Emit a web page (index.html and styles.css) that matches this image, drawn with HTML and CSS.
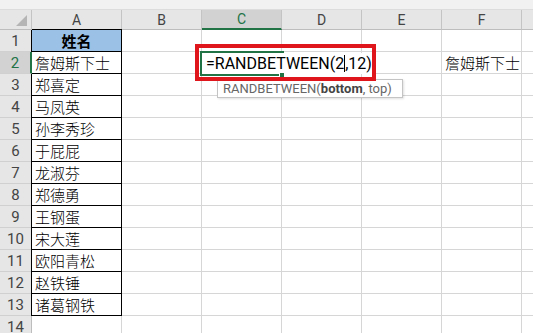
FILE: index.html
```html
<!DOCTYPE html>
<html lang="zh">
<head>
<meta charset="utf-8">
<title>Excel RANDBETWEEN</title>
<link rel="stylesheet" href="styles.css">
</head>
<body>
<div class="sheet">
  <div class="band"></div>

  <div class="corner"><span class="tri"></span></div>
  <div class="ch">A</div>
  <div class="ch">B</div>
  <div class="ch sel">C</div>
  <div class="ch">D</div>
  <div class="ch">E</div>
  <div class="ch">F</div>
  <div class="ch edge"></div>

  <div class="rh">1</div><div class="c t head">姓名</div><div class="c"></div><div class="c"></div><div class="c"></div><div class="c"></div><div class="c"></div><div class="c edge"></div>
  <div class="rh sel">2</div><div class="c t">詹姆斯下士</div><div class="c"></div><div class="c"></div><div class="c"></div><div class="c"></div><div class="c">詹姆斯下士</div><div class="c edge"></div>
  <div class="rh">3</div><div class="c t">郑喜定</div><div class="c"></div><div class="c"></div><div class="c"></div><div class="c"></div><div class="c"></div><div class="c edge"></div>
  <div class="rh">4</div><div class="c t">马凤英</div><div class="c"></div><div class="c"></div><div class="c"></div><div class="c"></div><div class="c"></div><div class="c edge"></div>
  <div class="rh">5</div><div class="c t">孙李秀珍</div><div class="c"></div><div class="c"></div><div class="c"></div><div class="c"></div><div class="c"></div><div class="c edge"></div>
  <div class="rh">6</div><div class="c t">于屁屁</div><div class="c"></div><div class="c"></div><div class="c"></div><div class="c"></div><div class="c"></div><div class="c edge"></div>
  <div class="rh">7</div><div class="c t">龙淑芬</div><div class="c"></div><div class="c"></div><div class="c"></div><div class="c"></div><div class="c"></div><div class="c edge"></div>
  <div class="rh">8</div><div class="c t">郑德勇</div><div class="c"></div><div class="c"></div><div class="c"></div><div class="c"></div><div class="c"></div><div class="c edge"></div>
  <div class="rh">9</div><div class="c t">王钢蛋</div><div class="c"></div><div class="c"></div><div class="c"></div><div class="c"></div><div class="c"></div><div class="c edge"></div>
  <div class="rh">10</div><div class="c t">宋大莲</div><div class="c"></div><div class="c"></div><div class="c"></div><div class="c"></div><div class="c"></div><div class="c edge"></div>
  <div class="rh">11</div><div class="c t">欧阳青松</div><div class="c"></div><div class="c"></div><div class="c"></div><div class="c"></div><div class="c"></div><div class="c edge"></div>
  <div class="rh">12</div><div class="c t">赵铁锤</div><div class="c"></div><div class="c"></div><div class="c"></div><div class="c"></div><div class="c"></div><div class="c edge"></div>
  <div class="rh">13</div><div class="c t">诸葛钢铁</div><div class="c"></div><div class="c"></div><div class="c"></div><div class="c"></div><div class="c"></div><div class="c edge"></div>
  <div class="rh">14</div><div class="c"></div><div class="c"></div><div class="c"></div><div class="c"></div><div class="c"></div><div class="c"></div><div class="c edge"></div>

  <div class="active"></div>
  <div class="editor">=RANDBETWEEN(2<span class="caret"></span>,12)</div>
  <div class="handle"></div>
  <div class="tip">RANDBETWEEN(<b>bottom</b>, top)</div>
  <div class="mark"></div>
</div>
</body>
</html>
```

FILE: styles.css
```css
* {
  box-sizing: border-box;
  margin: 0;
  padding: 0;
}

html,
body {
  width: 533px;
  height: 333px;
  overflow: hidden;
  background: #ffffff;
}

body {
  font-family: "Noto Sans CJK SC", "Noto Sans", sans-serif;
  color: #000000;
}

.sheet {
  position: relative;
  display: grid;
  grid-template-columns: 32px 90px repeat(5, 80px) 11px;
  grid-template-rows: 10px 20px repeat(14, 22px);
}

.band {
  grid-column: 1 / -1;
  background: #f1f1f1;
  border-bottom: 1px solid #dcdcdc;
}

.corner {
  position: relative;
  background: #e6e6e6;
  border-right: 1px solid #c4c4c4;
  border-bottom: 1px solid #bdbdbd;
}

.tri {
  position: absolute;
  right: 4px;
  bottom: 3px;
  width: 0;
  height: 0;
  border-left: 11px solid transparent;
  border-bottom: 11px solid #b5b5b5;
}

.ch {
  display: flex;
  align-items: center;
  justify-content: center;
  background: #e6e6e6;
  border-right: 1px solid #c4c4c4;
  border-bottom: 1px solid #bdbdbd;
  font-family: Roboto, "Liberation Sans", sans-serif;
  font-size: 14px;
  color: #444444;
}

.ch.sel {
  background: #d2d2d2;
  color: #217346;
  border-bottom: 2px solid #217346;
}

.ch.edge {
  border-right: none;
}

.rh {
  display: flex;
  align-items: center;
  justify-content: center;
  background: #e6e6e6;
  border-right: 1px solid #bdbdbd;
  border-bottom: 1px solid #d0d0d0;
  font-family: Roboto, "Liberation Sans", sans-serif;
  font-size: 15px;
  color: #444444;
}

.rh.sel {
  background: #d2d2d2;
  color: #217346;
  border-right: 2px solid #217346;
  z-index: 1;
}

.c {
  border-right: 1px solid #d6d6d6;
  border-bottom: 1px solid #d6d6d6;
  padding-left: 3px;
  font-size: 15px;
  font-weight: 300;
  line-height: 21px;
  white-space: nowrap;
  overflow: hidden;
}

.c.edge {
  border-right: none;
}

.c.t {
  border-right-color: #000000;
  border-bottom-color: #000000;
  box-shadow: -1px 0 0 #000000;
}

.c.t.head {
  background: #9bc2e6;
  font-weight: bold;
  text-align: center;
  padding-left: 0;
  box-shadow: -1px 0 0 #000000, 0 -1px 0 #000000, -1px -1px 0 #000000;
}

.active {
  position: absolute;
  left: 200px;
  top: 51px;
  width: 84px;
  height: 25px;
  border: 2px solid #217346;
}

.editor {
  position: absolute;
  left: 202px;
  top: 53px;
  width: 170px;
  height: 21px;
  background: #ffffff;
  padding-left: 4px;
  font-family: Roboto, "Liberation Sans", sans-serif;
  font-size: 16px;
  line-height: 21px;
  white-space: nowrap;
  color: #000000;
}

.caret {
  display: inline-block;
  width: 0;
  height: 17px;
  border-left: 1px solid #000000;
  vertical-align: -3px;
}

.handle {
  position: absolute;
  left: 279px;
  top: 72px;
  width: 6px;
  height: 6px;
  background: #217346;
  border: 1px solid #ffffff;
}

.tip {
  position: absolute;
  left: 217px;
  top: 79px;
  width: 186px;
  height: 19px;
  background: #ffffff;
  border: 1px solid #c4c4c4;
  box-shadow: 1px 1px 2px rgba(0, 0, 0, 0.12);
  padding-left: 5px;
  font-family: Roboto, "Liberation Sans", sans-serif;
  font-size: 13px;
  line-height: 17px;
  color: #666666;
  white-space: nowrap;
}

.tip b {
  color: #444444;
}

.mark {
  position: absolute;
  left: 195px;
  top: 44px;
  width: 181px;
  height: 37px;
  border: 4px solid #e0161d;
}
```
